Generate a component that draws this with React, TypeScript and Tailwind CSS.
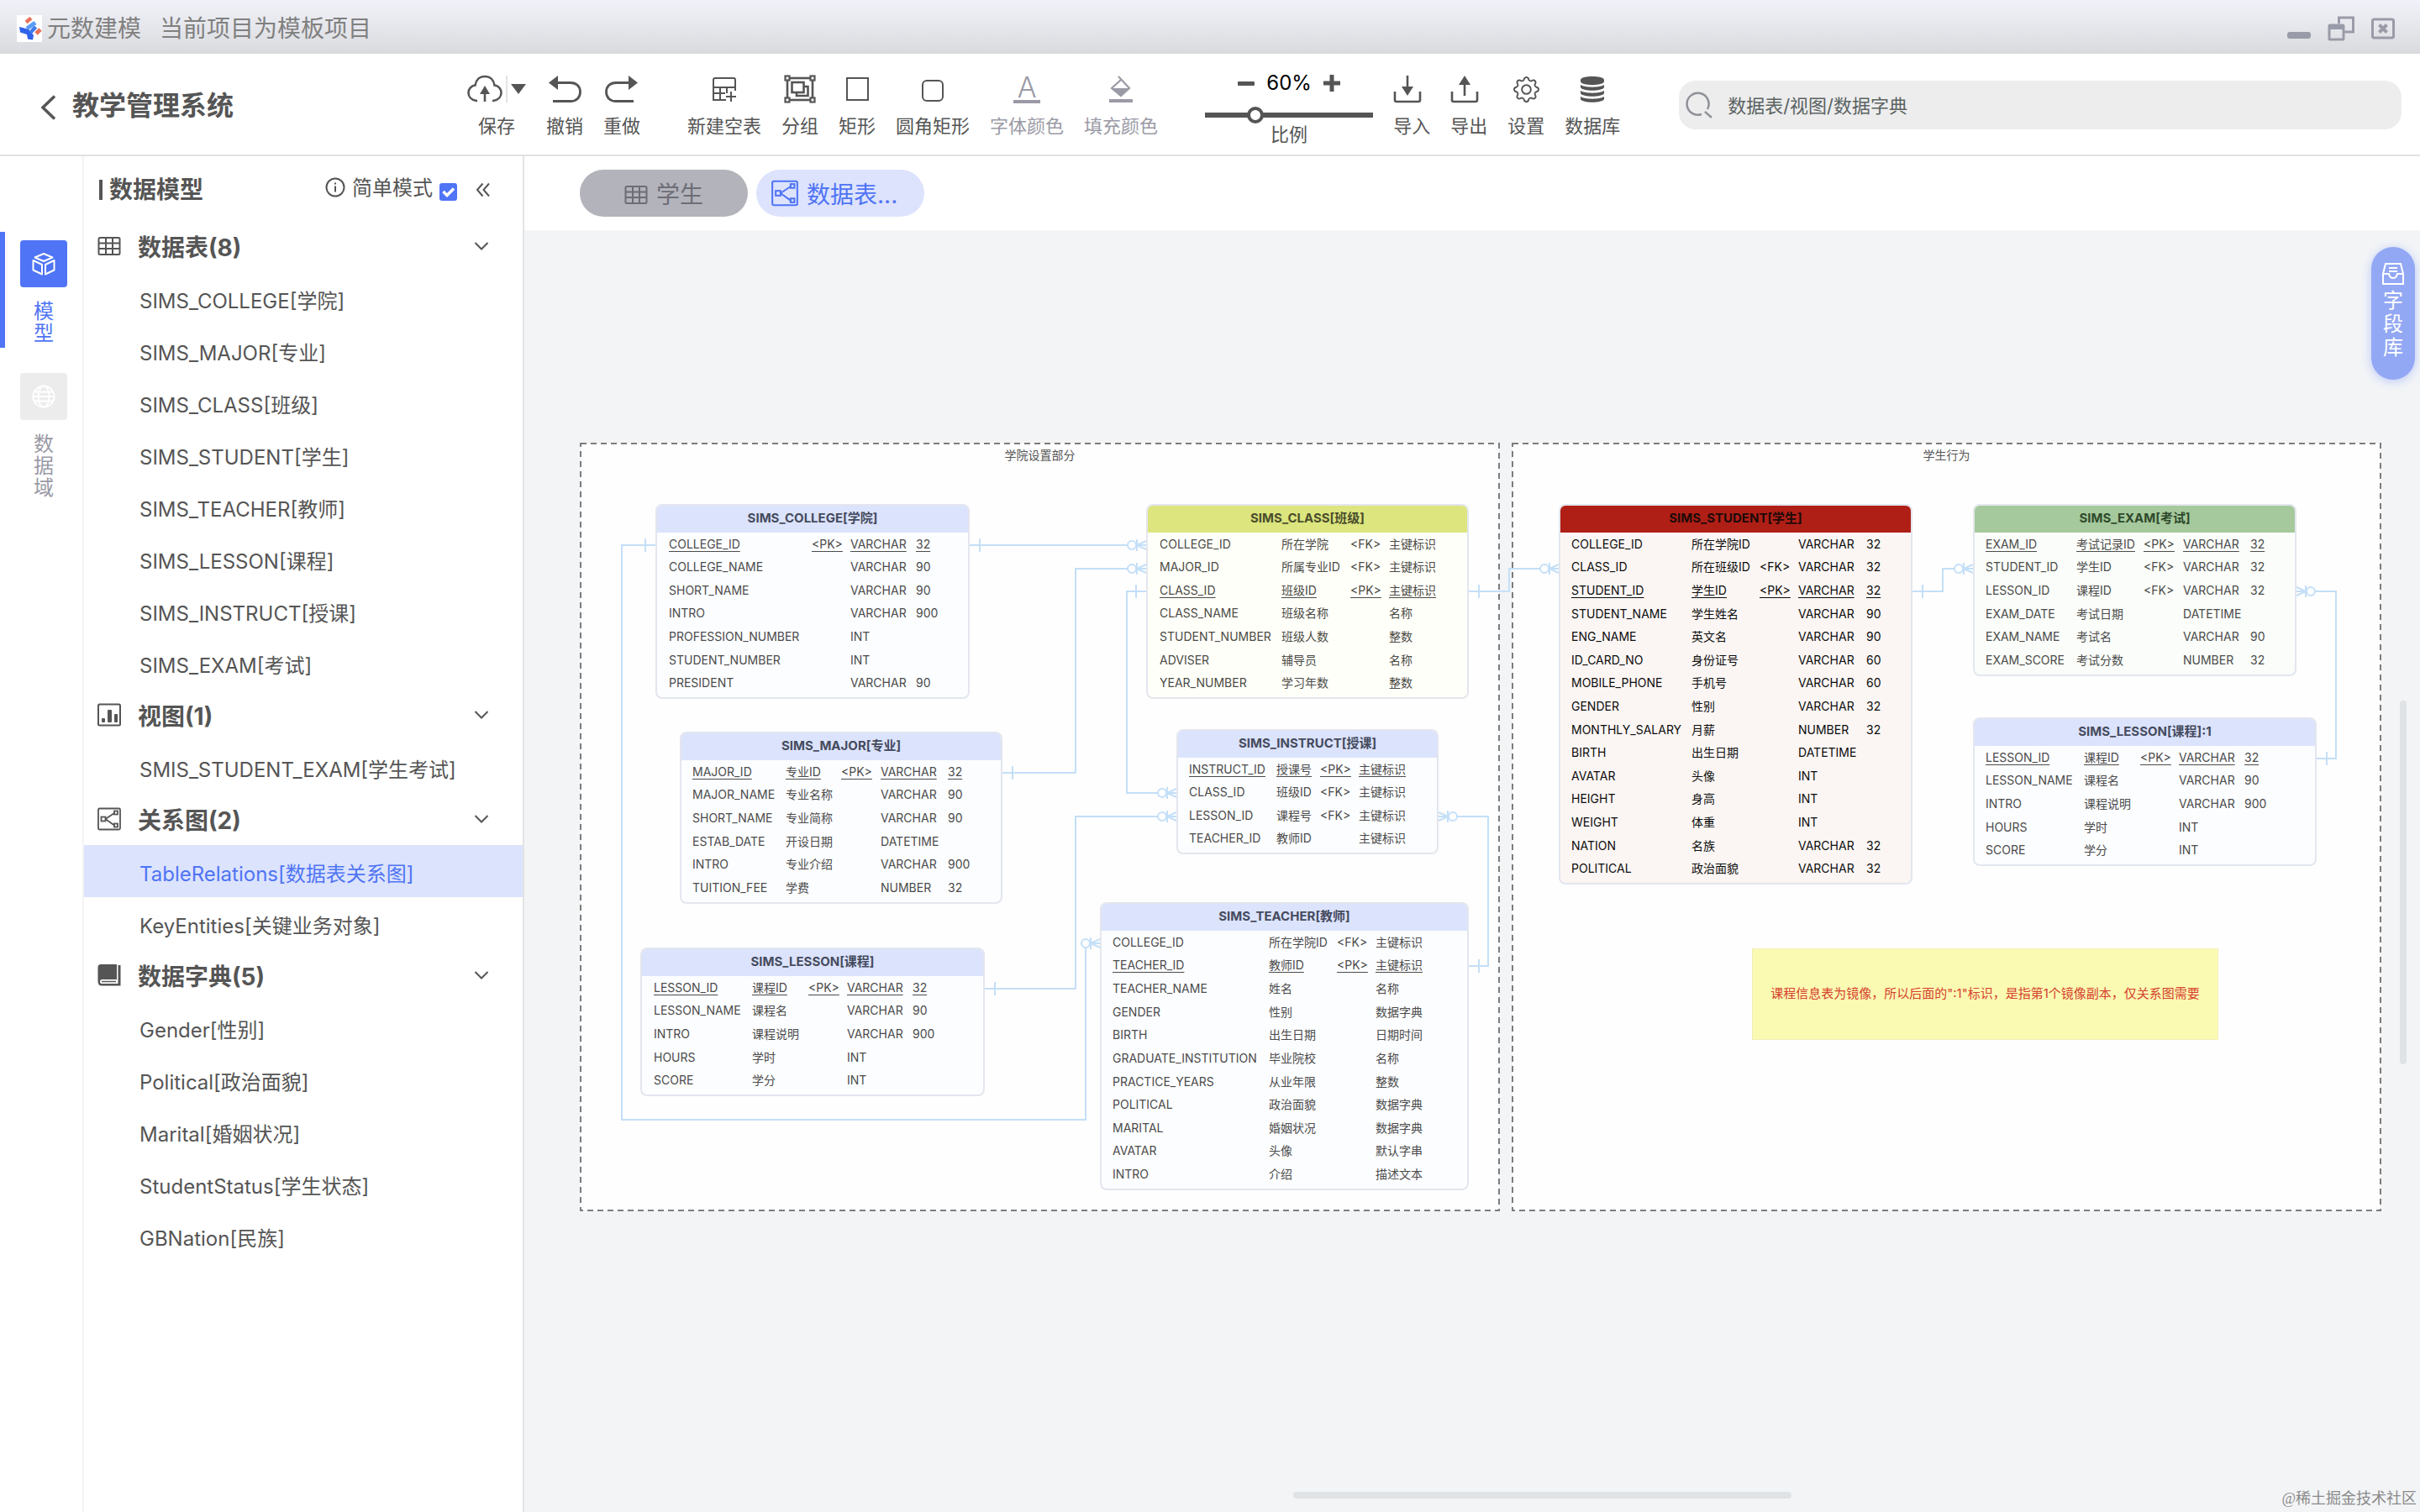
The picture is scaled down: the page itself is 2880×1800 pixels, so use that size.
import { ReactNode } from "react";
import { BsGear } from "react-icons/bs";

/* ---------- icons ---------- */

type IconProps = { className?: string };

const Logo = () => (
  <svg viewBox="0 0 30 32" className="h-8 w-[30px] bg-white" aria-hidden="true">
    <path d="M11 8.500 L17 3.500" stroke="#e8735c" strokeWidth="4.500" />
    <path d="M23 22 L28 17" stroke="#e8735c" strokeWidth="5" />
    <path d="M12 16 L22 9" stroke="#5a9cf5" strokeWidth="5" />
    <path d="M3 14 L9 15.500 L14 17 L20 24 L19 29.500 L13 28.500 L12 23 L4 20.500 Z" fill="#2f62ea" />
    <path d="M16 21 L22.500 14" stroke="#3f7bf0" strokeWidth="4.500" />
  </svg>
);

const CloudIcon = () => (
  <svg viewBox="0 0 42 34" className="h-[34px] w-[42px]" fill="none" stroke="currentColor" strokeWidth="2.6" aria-hidden="true">
    <path d="M12 31 H11 C5 30 1.500 26 1.500 21.500 C1.500 16.500 5 13 9.500 12.500 C10.500 6 15 2 21 2 C27 2 31.500 6 32.500 12.500 C37 13 40.500 16.500 40.500 21.500 C40.500 26 37 30 31 31 H30" />
    <path d="M21 32 V20" />
    <path d="M21 13 L27 23 H15 Z" fill="currentColor" stroke="none" />
  </svg>
);

const UndoIcon = ({ className = "" }: IconProps) => (
  <svg viewBox="0 0 40 34" className={`h-[34px] w-10 ${className}`} fill="none" stroke="currentColor" strokeWidth="2.8" aria-hidden="true">
    <path d="M8 9.500 H27 C34 9.500 38.500 14 38.500 20.500 C38.500 27 34 31.500 27 31.500 H6" />
    <path d="M1 9.500 L12 1 V18 Z" fill="currentColor" stroke="none" />
  </svg>
);

const NewTableIcon = () => (
  <svg viewBox="0 0 30 30" className="size-[30px]" fill="none" stroke="currentColor" strokeWidth="2" aria-hidden="true">
    <path d="M17 28 H2 V4 Q2 2 4 2 H26 Q28 2 28 4 V17 M2 13 H28 M2 20 H16 M10 13 V28 M18 13 V20" />
    <path d="M23 18 V30 M17 24 H29" />
  </svg>
);

const GroupIcon = () => (
  <svg viewBox="0 0 38 34" className="h-[34px] w-[38px]" fill="none" stroke="currentColor" strokeWidth="2.600" aria-hidden="true">
    <rect x="4" y="4" width="30" height="26" />
    <rect x="9.500" y="9" width="14" height="12" />
    <path d="M23.500 14 H28.500 V25 H15 V21" />
    <rect x="1.500" y="1.500" width="5" height="5" fill="#fff" strokeWidth="2.200" />
    <rect x="31.500" y="1.500" width="5" height="5" fill="#fff" strokeWidth="2.200" />
    <rect x="1.500" y="27.500" width="5" height="5" fill="#fff" strokeWidth="2.200" />
    <rect x="31.500" y="27.500" width="5" height="5" fill="#fff" strokeWidth="2.200" />
  </svg>
);

const FillIcon = () => (
  <svg viewBox="0 0 30 34" className="h-[34px] w-[30px]" aria-hidden="true">
    <path d="M12 2 L25 16 L15 25 L4 16 L15 6" fill="none" stroke="currentColor" strokeWidth="2.200" />
    <path d="M4 16 H25 L15 25.500 Z" fill="currentColor" />
    <rect x="1" y="29" width="28" height="4" fill="currentColor" />
  </svg>
);

const TrayIcon = ({ up = false }: { up?: boolean }) => (
  <svg viewBox="0 0 34 34" className="mr-2.5 size-[34px]" fill="none" stroke="currentColor" strokeWidth="2.600" aria-hidden="true">
    <path d="M2 20 V30 Q2 32 4 32 H30 Q32 32 32 30 V20" />
    {up ? (
      <>
        <path d="M17 25 V10" />
        <path d="M17 1 L24 12 H10 Z" fill="currentColor" stroke="none" />
      </>
    ) : (
      <>
        <path d="M17 1 V16" />
        <path d="M17 25 L24 14 H10 Z" fill="currentColor" stroke="none" />
      </>
    )}
  </svg>
);

const DatabaseIcon = () => (
  <svg viewBox="0 0 30 34" className="h-[34px] w-[30px]" fill="currentColor" aria-hidden="true">
    <path d="M1 6 C1 0.500 29 0.500 29 6 V8 C29 13.500 1 13.500 1 8 Z" />
    <path d="M1 12 C6 15.500 24 15.500 29 12 V15 C27 20 3 20 1 15 Z" />
    <path d="M1 19 C6 22.500 24 22.500 29 19 V22 C27 27 3 27 1 22 Z" />
    <path d="M1 26 C6 29.500 24 29.500 29 26 V29 C27 34 3 34 1 29 Z" />
  </svg>
);

const GridIcon = ({ className = "" }: IconProps) => (
  <svg viewBox="0 0 28 24" className={className} fill="none" stroke="currentColor" strokeWidth="2" aria-hidden="true">
    <rect x="1.500" y="2" width="25" height="20" rx="1.500" />
    <path d="M1.500 8.500 H26.500 M1.500 15 H26.500 M10 2 V22 M18 2 V22" />
  </svg>
);

const ChartIcon = ({ className = "" }: IconProps) => (
  <svg viewBox="0 0 28 28" className={className} aria-hidden="true">
    <rect x="1" y="1.500" width="26" height="25" rx="1.500" fill="none" stroke="currentColor" strokeWidth="2" />
    <rect x="5" y="18" width="4" height="5" rx="1" fill="currentColor" />
    <rect x="12" y="8" width="5" height="15" rx="1" fill="currentColor" />
    <rect x="20" y="13" width="4" height="10" rx="1" fill="currentColor" />
  </svg>
);

const RelationIcon = ({ className = "" }: IconProps) => (
  <svg viewBox="0 0 28 28" className={className} fill="none" stroke="currentColor" strokeWidth="1.800" aria-hidden="true">
    <rect x="1" y="1.500" width="26" height="25" rx="1.500" />
    <rect x="4.500" y="11.500" width="5" height="5" />
    <rect x="20" y="4.500" width="4" height="4" />
    <rect x="20" y="19.500" width="4" height="4" />
    <path d="M9.500 14 L20 7 M9.500 14 L20 21.500" />
  </svg>
);

const BookIcon = ({ className = "" }: IconProps) => (
  <svg viewBox="0 0 28 28" className={className} aria-hidden="true">
    <path d="M4 1 H23 V19 H5 Q3 19 3 21.500 Q3 24 5 24 H24.500 V2 H27.500 V26.500 H5 Q0.500 26.500 0.500 21 V5 Q0.500 1 4 1 Z" fill="currentColor" />
    <path d="M5 21.500 H22" stroke="currentColor" strokeWidth="1.500" />
  </svg>
);

const CubeIcon = () => (
  <svg viewBox="0 0 28 28" className="size-7" fill="none" stroke="currentColor" strokeWidth="2" strokeLinejoin="round" aria-hidden="true">
    <path d="M14 2 L24.500 6.500 L14 11 L3.500 6.500 Z" />
    <path d="M1.500 10 L12 15 V26.500 L1.500 21.500 Z" />
    <path d="M26.500 10 L16 15 V26.500 L26.500 21.500 Z" />
  </svg>
);

const GlobeIcon = () => (
  <svg viewBox="0 0 28 28" className="size-7" fill="none" stroke="currentColor" strokeWidth="2" aria-hidden="true">
    <circle cx="14" cy="14" r="12.500" />
    <ellipse cx="14" cy="14" rx="6.500" ry="12.500" />
    <path d="M3 8.500 H25 M3 19.500 H25" />
    <path d="M1.500 14 H26.500" />
  </svg>
);

const LibraryIcon = () => (
  <svg viewBox="0 0 28 28" className="size-7" fill="none" stroke="currentColor" strokeWidth="2" aria-hidden="true">
    <path d="M2 14 L5 2 H23 L26 14 V26 H2 Z" />
    <path d="M2 14 H9 Q10 19 14 19 Q18 19 19 14 H26" />
    <path d="M9 7 H19 M9 11 H19" />
  </svg>
);

const ChevronDown = () => (
  <svg viewBox="0 0 18 12" className="h-3 w-[18px]" fill="none" stroke="currentColor" strokeWidth="2" aria-hidden="true">
    <path d="M1.500 2 L9 9.500 L16.500 2" />
  </svg>
);

/* ---------- header ---------- */

const TitleBar = () => (
  <div className="flex h-16 shrink-0 items-center bg-linear-to-b from-[#f1f2f9] via-[#e6e7ec] to-[#d9dadd] pl-5 pr-[30px] pt-1 text-[28px] leading-8 text-[#808080]">
    <Logo />
    <span className="ml-1.5">元数建模</span>
    <span className="ml-[22px]">当前项目为模板项目</span>
    <div className="ml-auto flex items-center gap-5 text-[#9a9ba8]">
      <button type="button" aria-label="最小化" className="flex h-8 w-7 items-end pb-1">
        <span className="h-2 w-7 rounded-[3px] bg-current" />
      </button>
      <button type="button" aria-label="还原">
        <svg viewBox="0 0 32 32" className="size-8" fill="none" stroke="currentColor" strokeWidth="3" aria-hidden="true">
          <path d="M13.500 10 V3 H30.500 V20 H20" />
          <rect x="2" y="12" width="17" height="17" rx="1" />
          <path d="M2 14 H19" strokeWidth="6" />
        </svg>
      </button>
      <button type="button" aria-label="关闭">
        <svg viewBox="0 0 28 26" className="h-[26px] w-7" fill="none" stroke="currentColor" strokeWidth="3" aria-hidden="true">
          <rect x="1.500" y="2" width="25" height="22" rx="2" />
          <path d="M9.500 8.500 L18.500 17.500 M18.500 8.500 L9.500 17.500" strokeWidth="4" />
        </svg>
      </button>
    </div>
  </div>
);

const Tool = ({ label, muted = false, children }: { label: string; muted?: boolean; children: ReactNode }) => (
  <button type="button" className={`flex flex-col items-center px-3 pt-6 ${muted ? "text-[#9a9aa6]" : "text-[#555]"}`}>
    <span className="flex h-9 items-center justify-center">{children}</span>
    <span className="mt-3 whitespace-nowrap text-[22px] leading-7">{label}</span>
  </button>
);

const Header = () => (
  <header className="flex h-[122px] shrink-0 items-start border-b-2 border-[#e0e1e3] bg-white">
    <div className="flex w-[544px] shrink-0 items-center pl-12 pt-10 text-[#555]">
      <button type="button" aria-label="返回" className="pt-1">
        <svg viewBox="0 0 20 30" className="h-[30px] w-5" fill="none" stroke="currentColor" strokeWidth="3.500" aria-hidden="true">
          <path d="M17 1.500 L3 15 L17 28.500" />
        </svg>
      </button>
      <h1 className="ml-[18px] text-[32px] font-bold leading-11">教学管理系统</h1>
    </div>
    <div className="flex shrink-0 items-start">
      <Tool label="保存">
        <span className="flex w-[70px] items-center justify-between">
          <CloudIcon />
          <span className="h-8 w-0.5 bg-[#e3e3e6]" />
          <svg viewBox="0 0 18 12" className="h-3 w-[18px]" aria-hidden="true">
            <path d="M0 0 H18 L9 12 Z" fill="currentColor" />
          </svg>
        </span>
      </Tool>
      <Tool label="撤销"><UndoIcon /></Tool>
      <Tool label="重做"><UndoIcon className="-scale-x-100" /></Tool>
      <div className="ml-8 flex">
        <Tool label="新建空表"><NewTableIcon /></Tool>
        <Tool label="分组"><GroupIcon /></Tool>
        <Tool label="矩形"><span className="h-7 w-[27px] border-2 border-current" /></Tool>
        <Tool label="圆角矩形"><span className="mt-1 size-[26px] rounded-md border-2 border-current" /></Tool>
        <Tool label="字体颜色" muted>
          <span className="flex w-8 flex-col items-center border-b-4 border-current text-[34px] font-light leading-[30px]">A</span>
        </Tool>
        <Tool label="填充颜色" muted><FillIcon /></Tool>
      </div>
      <div className="ml-11 mr-3 flex w-[200px] flex-col items-center pt-[22px] text-[#555]">
        <div className="flex h-[26px] items-center gap-3.5">
          <button type="button" aria-label="缩小" className="grid size-5 place-items-center">
            <span className="h-[5px] w-5 rounded-[1px] bg-current" />
          </button>
          <span className="text-2xl text-black">60%</span>
          <button type="button" aria-label="放大" className="grid size-5 place-items-center">
            <svg viewBox="0 0 20 20" className="size-5" stroke="currentColor" strokeWidth="5" aria-hidden="true">
              <path d="M10 0 V20 M0 10 H20" />
            </svg>
          </button>
        </div>
        <input
          id="zoom"
          type="range"
          min={10}
          max={190}
          defaultValue={60}
          className="mt-[22px] h-1.5 w-full appearance-none bg-[#555] [&::-webkit-slider-thumb]:size-5 [&::-webkit-slider-thumb]:appearance-none [&::-webkit-slider-thumb]:rounded-full [&::-webkit-slider-thumb]:border-4 [&::-webkit-slider-thumb]:border-[#555] [&::-webkit-slider-thumb]:bg-white"
        />
        <label htmlFor="zoom" className="mt-1.5 text-[22px] leading-7">比例</label>
      </div>
      <Tool label="导入"><TrayIcon /></Tool>
      <Tool label="导出"><TrayIcon up /></Tool>
      <Tool label="设置"><BsGear className="size-[31px]" /></Tool>
      <Tool label="数据库"><DatabaseIcon /></Tool>
    </div>
    <label className="ml-[58px] mr-[22px] mt-8 flex h-[58px] min-w-0 flex-1 items-center rounded-[20px] bg-[#ededed] pl-2">
      <svg viewBox="0 0 34 34" className="size-[34px] text-[#8f9298]" fill="none" stroke="currentColor" strokeWidth="2.500" aria-hidden="true">
        <path d="M19 28 A13 13 0 1 1 26 22 M23 25 L31 32" />
      </svg>
      <input
        type="search"
        aria-label="搜索"
        placeholder="数据表/视图/数据字典"
        className="ml-4 min-w-0 flex-1 bg-transparent pt-0.5 text-[22px] leading-7 outline-none placeholder:text-[#5b6363]"
      />
    </label>
  </header>
);

/* ---------- left side ---------- */

const RailItem = ({ chars, active = false, children }: { chars: string; active?: boolean; children: ReactNode }) => (
  <button type="button" className={`flex w-full flex-col items-center border-l-[6px] pb-1 pt-2.5 ${active ? "border-[#4f74f5] text-[#4f74f5]" : "border-transparent text-[#9a9aa6]"}`}>
    <span className={`grid size-14 place-items-center rounded-sm text-white ${active ? "bg-[#4f74f5]" : "bg-[#ececec]"}`}>{children}</span>
    <span className="mt-4 w-6 break-all text-2xl leading-[26px]">{chars}</span>
  </button>
);

type Group = { title: string; icon: ReactNode; items: string[] };

const groups: Group[] = [
  {
    title: "数据表(8)",
    icon: <GridIcon className="h-6 w-7" />,
    items: [
      "SIMS_COLLEGE[学院]",
      "SIMS_MAJOR[专业]",
      "SIMS_CLASS[班级]",
      "SIMS_STUDENT[学生]",
      "SIMS_TEACHER[教师]",
      "SIMS_LESSON[课程]",
      "SIMS_INSTRUCT[授课]",
      "SIMS_EXAM[考试]",
    ],
  },
  { title: "视图(1)", icon: <ChartIcon className="size-7" />, items: ["SMIS_STUDENT_EXAM[学生考试]"] },
  { title: "关系图(2)", icon: <RelationIcon className="size-7" />, items: ["TableRelations[数据表关系图]", "KeyEntities[关键业务对象]"] },
  {
    title: "数据字典(5)",
    icon: <BookIcon className="size-7" />,
    items: ["Gender[性别]", "Political[政治面貌]", "Marital[婚姻状况]", "StudentStatus[学生状态]", "GBNation[民族]"],
  },
];

const Sidebar = () => (
  <aside className="w-[524px] shrink-0 border-r-2 border-[#e2e3e6] bg-white text-[#555]">
    <div className="flex h-[76px] items-center pl-[18px] pr-[38px] pt-1">
      <span className="h-6 w-1 bg-current" />
      <h2 className="ml-2 text-[28px] font-bold leading-8">数据模型</h2>
      <div className="ml-auto flex items-center text-2xl leading-7">
        <svg viewBox="0 0 24 24" className="mb-1.5 mr-2 size-6" fill="none" stroke="currentColor" strokeWidth="2" aria-hidden="true">
          <circle cx="12" cy="12" r="10.500" />
          <path d="M12 10.500 V17.500 M12 6.500 V8.500" />
        </svg>
        <label htmlFor="simple-mode" className="mb-1">简单模式</label>
        <span className="relative ml-2 mt-1 block size-[21px]">
          <input id="simple-mode" type="checkbox" defaultChecked className="peer block size-[21px] appearance-none rounded-[3px] border-2 border-[#4f74f5] checked:bg-[#4f74f5]" />
          <svg viewBox="0 0 21 21" className="pointer-events-none absolute inset-0 hidden size-[21px] peer-checked:block" fill="none" stroke="#fff" strokeWidth="3.500" aria-hidden="true">
            <path d="M4.500 10 L9 14.500 L17 6.500" />
          </svg>
        </span>
      </div>
      <button type="button" aria-label="收起" className="ml-[22px]">
        <svg viewBox="0 0 18 18" className="size-[18px]" fill="none" stroke="currentColor" strokeWidth="2" aria-hidden="true">
          <path d="M8.500 1.500 L2 9 L8.500 16.500 M16 1.500 L9.500 9 L16 16.500" />
        </svg>
      </button>
    </div>
    <nav>
      {groups.map((g) => (
        <section key={g.title}>
          <button type="button" className="flex h-[62px] w-full items-center pl-4 pr-10">
            {g.icon}
            <span className="ml-5 pt-1 text-[28px] font-bold leading-8">{g.title}</span>
            <span className="ml-auto"><ChevronDown /></span>
          </button>
          {g.items.map((item) => (
            <a
              key={item}
              href="#"
              className={`flex h-[62px] items-center pl-[66px] pt-2 text-2xl ${item.startsWith("TableRelations") ? "bg-[#dce3fc] text-[#4f74f5]" : ""}`}
            >
              {item}
            </a>
          ))}
        </section>
      ))}
    </nav>
  </aside>
);

/* ---------- diagram ---------- */

/* Top left corner of the canvas in diagram coordinates. */
const ORIGIN = { x: 624, y: 274 };
/* Card height that is not table rows: borders, title and bottom padding. */
const CARD_CHROME = 39;

type Entity = {
  title: string;
  x: number;
  y: number;
  w: number;
  h: number;
  head: string;
  body: string;
  cols: number[];
  rows: string[][];
};

const blueHead = "bg-[#dce3fc] text-[#454b5e]";
const blueBody = "bg-[#fcfdff] text-[#4b4b4b]";

const entities: Entity[] = [
  {
    title: "SIMS_COLLEGE[学院]", x: 780, y: 600, w: 374, h: 232, head: blueHead, body: blueBody,
    cols: [14, 170, 46, 78, 64],
    rows: [
      ["COLLEGE_ID", "<PK>", "VARCHAR", "32"],
      ["COLLEGE_NAME", "", "VARCHAR", "90"],
      ["SHORT_NAME", "", "VARCHAR", "90"],
      ["INTRO", "", "VARCHAR", "900"],
      ["PROFESSION_NUMBER", "", "INT", ""],
      ["STUDENT_NUMBER", "", "INT", ""],
      ["PRESIDENT", "", "VARCHAR", "90"],
    ],
  },
  {
    title: "SIMS_MAJOR[专业]", x: 809, y: 871, w: 384, h: 205, head: blueHead, body: blueBody,
    cols: [13, 111, 66, 47, 80, 65],
    rows: [
      ["MAJOR_ID", "专业ID", "<PK>", "VARCHAR", "32"],
      ["MAJOR_NAME", "专业名称", "", "VARCHAR", "90"],
      ["SHORT_NAME", "专业简称", "", "VARCHAR", "90"],
      ["ESTAB_DATE", "开设日期", "", "DATETIME", ""],
      ["INTRO", "专业介绍", "", "VARCHAR", "900"],
      ["TUITION_FEE", "学费", "", "NUMBER", "32"],
    ],
  },
  {
    title: "SIMS_LESSON[课程]", x: 762, y: 1128, w: 410, h: 177, head: blueHead, body: blueBody,
    cols: [14, 117, 67, 46, 78, 86],
    rows: [
      ["LESSON_ID", "课程ID", "<PK>", "VARCHAR", "32"],
      ["LESSON_NAME", "课程名", "", "VARCHAR", "90"],
      ["INTRO", "课程说明", "", "VARCHAR", "900"],
      ["HOURS", "学时", "", "INT", ""],
      ["SCORE", "学分", "", "INT", ""],
    ],
  },
  {
    title: "SIMS_CLASS[班级]", x: 1364, y: 600, w: 384, h: 232, head: "bg-[#dce57e] text-[#4a4d2c]", body: "bg-[#fffffa] text-[#4b4b45]",
    cols: [14, 145, 82, 46, 95],
    rows: [
      ["COLLEGE_ID", "所在学院", "<FK>", "主键标识"],
      ["MAJOR_ID", "所属专业ID", "<FK>", "主键标识"],
      ["CLASS_ID", "班级ID", "<PK>", "主键标识"],
      ["CLASS_NAME", "班级名称", "", "名称"],
      ["STUDENT_NUMBER", "班级人数", "", "整数"],
      ["ADVISER", "辅导员", "", "名称"],
      ["YEAR_NUMBER", "学习年数", "", "整数"],
    ],
  },
  {
    title: "SIMS_INSTRUCT[授课]", x: 1400, y: 868, w: 312, h: 149, head: blueHead, body: blueBody,
    cols: [13, 104, 52, 46, 93],
    rows: [
      ["INSTRUCT_ID", "授课号", "<PK>", "主键标识"],
      ["CLASS_ID", "班级ID", "<FK>", "主键标识"],
      ["LESSON_ID", "课程号", "<FK>", "主键标识"],
      ["TEACHER_ID", "教师ID", "", "主键标识"],
    ],
  },
  {
    title: "SIMS_TEACHER[教师]", x: 1309, y: 1074, w: 439, h: 343, head: blueHead, body: blueBody,
    cols: [13, 186, 81, 46, 109],
    rows: [
      ["COLLEGE_ID", "所在学院ID", "<FK>", "主键标识"],
      ["TEACHER_ID", "教师ID", "<PK>", "主键标识"],
      ["TEACHER_NAME", "姓名", "", "名称"],
      ["GENDER", "性别", "", "数据字典"],
      ["BIRTH", "出生日期", "", "日期时间"],
      ["GRADUATE_INSTITUTION", "毕业院校", "", "名称"],
      ["PRACTICE_YEARS", "从业年限", "", "整数"],
      ["POLITICAL", "政治面貌", "", "数据字典"],
      ["MARITAL", "婚姻状况", "", "数据字典"],
      ["AVATAR", "头像", "", "默认字串"],
      ["INTRO", "介绍", "", "描述文本"],
    ],
  },
  {
    title: "SIMS_STUDENT[学生]", x: 1855, y: 600, w: 421, h: 453, head: "bg-[#b01f16] text-[#1c0a08]", body: "bg-[#fbf6f4] text-[#0c0c0c]",
    cols: [13, 143, 81, 46, 81, 53],
    rows: [
      ["COLLEGE_ID", "所在学院ID", "", "VARCHAR", "32"],
      ["CLASS_ID", "所在班级ID", "<FK>", "VARCHAR", "32"],
      ["STUDENT_ID", "学生ID", "<PK>", "VARCHAR", "32"],
      ["STUDENT_NAME", "学生姓名", "", "VARCHAR", "90"],
      ["ENG_NAME", "英文名", "", "VARCHAR", "90"],
      ["ID_CARD_NO", "身份证号", "", "VARCHAR", "60"],
      ["MOBILE_PHONE", "手机号", "", "VARCHAR", "60"],
      ["GENDER", "性别", "", "VARCHAR", "32"],
      ["MONTHLY_SALARY", "月薪", "", "NUMBER", "32"],
      ["BIRTH", "出生日期", "", "DATETIME", ""],
      ["AVATAR", "头像", "", "INT", ""],
      ["HEIGHT", "身高", "", "INT", ""],
      ["WEIGHT", "体重", "", "INT", ""],
      ["NATION", "名族", "", "VARCHAR", "32"],
      ["POLITICAL", "政治面貌", "", "VARCHAR", "32"],
    ],
  },
  {
    title: "SIMS_EXAM[考试]", x: 2348, y: 600, w: 385, h: 205, head: "bg-[#a5c99c] text-[#2f4a2c]", body: "bg-[#fafdf9] text-[#4b4b4b]",
    cols: [13, 108, 80, 47, 80, 53],
    rows: [
      ["EXAM_ID", "考试记录ID", "<PK>", "VARCHAR", "32"],
      ["STUDENT_ID", "学生ID", "<FK>", "VARCHAR", "32"],
      ["LESSON_ID", "课程ID", "<FK>", "VARCHAR", "32"],
      ["EXAM_DATE", "考试日期", "", "DATETIME", ""],
      ["EXAM_NAME", "考试名", "", "VARCHAR", "90"],
      ["EXAM_SCORE", "考试分数", "", "NUMBER", "32"],
    ],
  },
  {
    title: "SIMS_LESSON[课程]:1", x: 2348, y: 854, w: 409, h: 177, head: blueHead, body: blueBody,
    cols: [13, 117, 67, 46, 78, 84],
    rows: [
      ["LESSON_ID", "课程ID", "<PK>", "VARCHAR", "32"],
      ["LESSON_NAME", "课程名", "", "VARCHAR", "90"],
      ["INTRO", "课程说明", "", "VARCHAR", "900"],
      ["HOURS", "学时", "", "INT", ""],
      ["SCORE", "学分", "", "INT", ""],
    ],
  },
];

const EntityCard = ({ entity: e }: { entity: Entity }) => (
  <article
    className={`absolute overflow-hidden rounded-lg border-2 border-[#e3e6ee] ${e.body}`}
    style={{ left: e.x - ORIGIN.x, top: e.y - ORIGIN.y, width: e.w, height: e.h }}
  >
    <h3 className={`h-8 text-center text-[15px] font-bold leading-[30px] ${e.head}`}>{e.title}</h3>
    <table aria-label={e.title} className="w-full table-fixed text-sm leading-5" style={{ height: e.h - CARD_CHROME }}>
      <colgroup>
        {e.cols.map((w, i) => (
          <col key={i} style={{ width: w }} />
        ))}
      </colgroup>
      <tbody>
        {e.rows.map((r) => (
          <tr key={r[0]} className={r.includes("<PK>") ? "underline underline-offset-3" : ""}>
            <td />
            {r.map((c, i) => (
              <td key={i} className="whitespace-nowrap">{c}</td>
            ))}
          </tr>
        ))}
      </tbody>
    </table>
  </article>
);

/* Connector end: dir points from the card edge outwards (1 right, -1 left). */
type End = { x: number; y: number; dir: 1 | -1 };

const OneEnd = ({ x, y, dir }: End) => <path d={`M${x + 12 * dir} ${y - 8} V${y + 8}`} />;

const ManyEnd = ({ x, y, dir }: End) => (
  <g>
    <path d={`M${x + 11 * dir} ${y - 7} V${y + 7} M${x + 11 * dir} ${y} L${x} ${y - 5} M${x + 11 * dir} ${y} L${x} ${y + 5}`} />
    <circle cx={x + 17 * dir} cy={y} r="5" className="fill-white" />
  </g>
);

const links: { d: string; one: End; many: End }[] = [
  { d: "M1154 649 H1364", one: { x: 1154, y: 649, dir: 1 }, many: { x: 1364, y: 649, dir: -1 } },
  { d: "M1193 920 H1280 V677 H1364", one: { x: 1193, y: 920, dir: 1 }, many: { x: 1364, y: 677, dir: -1 } },
  { d: "M1364 704 H1341 V944 H1400", one: { x: 1364, y: 704, dir: -1 }, many: { x: 1400, y: 944, dir: -1 } },
  { d: "M1172 1177 H1280 V972 H1400", one: { x: 1172, y: 1177, dir: 1 }, many: { x: 1400, y: 972, dir: -1 } },
  { d: "M780 649 H740 V1333 H1292 V1123 H1309", one: { x: 780, y: 649, dir: -1 }, many: { x: 1309, y: 1123, dir: -1 } },
  { d: "M1712 972 H1771 V1150 H1748", one: { x: 1748, y: 1150, dir: 1 }, many: { x: 1712, y: 972, dir: 1 } },
  { d: "M1748 704 H1796 V677 H1855", one: { x: 1748, y: 704, dir: 1 }, many: { x: 1855, y: 677, dir: -1 } },
  { d: "M2276 704 H2312 V677 H2348", one: { x: 2276, y: 704, dir: 1 }, many: { x: 2348, y: 677, dir: -1 } },
  { d: "M2733 704 H2780 V903 H2757", one: { x: 2757, y: 903, dir: 1 }, many: { x: 2733, y: 704, dir: 1 } },
];

const areas = [
  { title: "学院设置部分", x: 691, y: 528, w: 1093, h: 913 },
  { title: "学生行为", x: 1800, y: 528, w: 1033, h: 913 },
];

const Canvas = () => (
  <div className="relative min-h-0 flex-1 overflow-hidden bg-[#f2f4f6]">
    <svg className="absolute inset-0 size-full" fill="none" aria-hidden="true">
      <g transform={`translate(${-ORIGIN.x} ${-ORIGIN.y})`}>
        {areas.map((a) => (
          <rect key={a.title} x={a.x} y={a.y} width={a.w} height={a.h} fill="#fefefe" stroke="#7d7d7d" strokeWidth="2" strokeDasharray="7 5" />
        ))}
        <g stroke="#c4dff8" strokeWidth="2">
          {links.map((l) => (
            <g key={l.d}>
              <path d={l.d} />
              <OneEnd {...l.one} />
              <ManyEnd {...l.many} />
            </g>
          ))}
        </g>
      </g>
    </svg>
    {areas.map((a) => (
      <div
        key={a.title}
        className="absolute pt-1 text-center text-sm leading-5 text-[#555]"
        style={{ left: a.x - ORIGIN.x, top: a.y - ORIGIN.y, width: a.w }}
      >
        {a.title}
      </div>
    ))}
    {entities.map((e) => (
      <EntityCard key={e.title} entity={e} />
    ))}
    <p
      className="absolute flex h-[109px] w-[555px] items-center justify-center whitespace-nowrap border border-[#f0efb8] bg-[#fbfab3] text-[15px] text-[#d5402b]"
      style={{ left: 2085 - ORIGIN.x, top: 1129 - ORIGIN.y }}
    >
      课程信息表为镜像，所以后面的":1"标识，是指第1个镜像副本，仅关系图需要
    </p>
    <button
      type="button"
      className="absolute right-1.5 top-5 flex h-[158px] w-[52px] flex-col items-center rounded-full bg-[#93a8f4] pt-[18px] text-white shadow-[0_2px_12px_#b9c8fa]"
    >
      <LibraryIcon />
      <span className="mt-1 w-6 break-all text-2xl leading-7">字段库</span>
    </button>
    <div className="absolute right-4 top-[560px] h-[433px] w-2 rounded-full bg-[#dfe3e5]" />
    <div className="absolute bottom-4 left-[915px] h-2 w-[593px] rounded-full bg-[#dfe3e5]" />
    <span className="absolute bottom-1 right-1 font-['Liberation_Serif','Noto_Sans_CJK_SC',serif] text-[18px] leading-6 text-[#8a8a8a]">@稀土掘金技术社区</span>
  </div>
);

const App = () => (
  <div className="flex h-screen flex-col overflow-hidden bg-white font-['Inter','Noto_Sans_CJK_SC',sans-serif]">
    <TitleBar />
    <Header />
    <div className="flex min-h-0 flex-1">
      <div className="flex w-[100px] shrink-0 flex-col gap-5 border-r-2 border-[#f3f3f3] pt-[90px]">
        <RailItem chars="模型" active><CubeIcon /></RailItem>
        <RailItem chars="数据域"><GlobeIcon /></RailItem>
      </div>
      <Sidebar />
      <main className="flex min-w-0 flex-1 flex-col">
        <div className="flex h-[88px] shrink-0 gap-2.5 pl-[66px] pt-4 text-[28px]">
          <button type="button" className="flex h-14 w-[200px] items-center justify-center gap-2.5 rounded-[28px] bg-[#b3b3bb] text-[#6d6d77]">
            <GridIcon className="mt-1 h-6 w-7" />
            <span className="pt-1">学生</span>
          </button>
          <button type="button" className="flex h-14 w-[200px] items-center gap-2.5 rounded-[28px] bg-[#dde3fc] pl-[18px] text-[#4f74f5]">
            <RelationIcon className="size-8" />
            <span className="pt-1">数据表...</span>
          </button>
        </div>
        <Canvas />
      </main>
    </div>
  </div>
);

export default App;
